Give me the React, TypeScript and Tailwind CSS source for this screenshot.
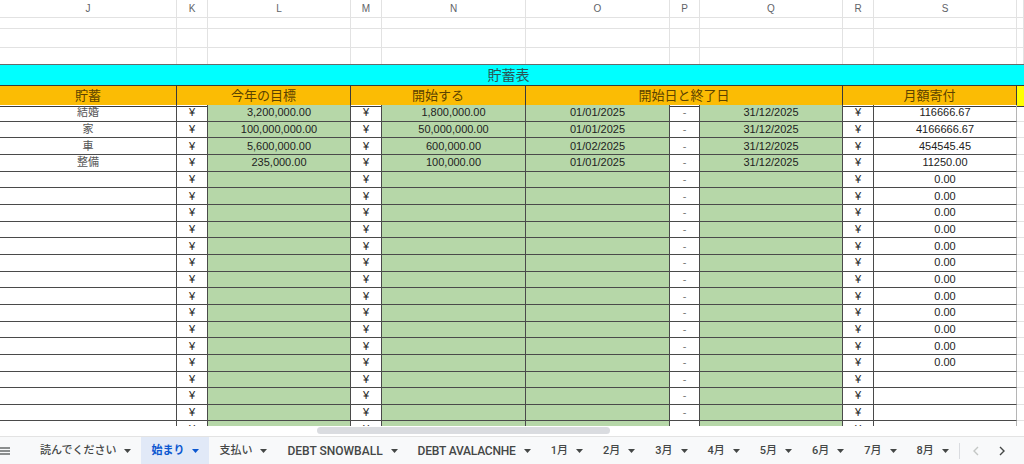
import React from "react";

const COLS =
  "grid grid-cols-[177px_31px_143px_31px_144px_144px_30px_143px_31px_143px_1fr]";
const FONT = {
  fontFamily:
    '"Liberation Sans", Arial, "Noto Sans CJK JP", sans-serif',
};
const LETTERS = ["J", "K", "L", "M", "N", "O", "P", "Q", "R", "S", ""];

type Row = {
  name?: string;
  goal?: string;
  start?: string;
  from?: string;
  to?: string;
  monthly?: string;
};

const data: Row[] = [
  { name: "結婚", goal: "3,200,000.00", start: "1,800,000.00", from: "01/01/2025", to: "31/12/2025", monthly: "116666.67" },
  { name: "家", goal: "100,000,000.00", start: "50,000,000.00", from: "01/01/2025", to: "31/12/2025", monthly: "4166666.67" },
  { name: "車", goal: "5,600,000.00", start: "600,000.00", from: "01/02/2025", to: "31/12/2025", monthly: "454545.45" },
  { name: "整備", goal: "235,000.00", start: "100,000.00", from: "01/01/2025", to: "31/12/2025", monthly: "11250.00" },
];
for (let i = 4; i < 20; i++) data.push({ monthly: i < 16 ? "0.00" : "" });

function Arrow({ active }: { active?: boolean }) {
  return (
    <svg width="7" height="4" viewBox="0 0 7 4" className="shrink-0">
      <polygon points="0,0 7,0 3.5,4" fill={active ? "#0b57d0" : "#444746"} />
    </svg>
  );
}

function Tab({ label, active, size }: { label: string; active?: boolean; size: string }) {
  return (
    <div
      className={`flex items-center gap-[8px] px-[10px] h-full ${
        active ? "bg-[#e1e9f7] text-[#0b57d0] font-bold" : "text-[#444746] font-medium"
      }`}
    >
      <span className={`${size} whitespace-nowrap leading-none`}>{label}</span>
      <Arrow active={active} />
    </div>
  );
}

function EmptyRow({ h }: { h: string }) {
  return (
    <div className={`${COLS} ${h}`}>
      {LETTERS.map((_, i) => (
        <div key={i} className="border-r border-b border-[#e2e2e2]" />
      ))}
    </div>
  );
}

export default function App() {
  const cell =
    "flex items-center justify-center border-r border-b border-[#4a4a4a] leading-none whitespace-nowrap";
  const green = "bg-[#b6d7a8]";
  return (
    <div className="w-[1024px] h-[464px] overflow-hidden bg-white flex flex-col" style={FONT}>
      {/* column letters */}
      <div className={`${COLS} h-[18px] shrink-0`}>
        {LETTERS.map((l, i) => (
          <div
            key={i}
            className="flex items-center justify-center border-r border-b border-[#e2e2e2] text-[10px] text-[#5f6368]"
          >
            {l}
          </div>
        ))}
      </div>
      <EmptyRow h="h-[11px]" />
      <EmptyRow h="h-[19px]" />
      <div className={`${COLS} h-[16px]`}>
        {LETTERS.map((_, i) => (
          <div key={i} className="border-r border-[#e2e2e2]" />
        ))}
      </div>

      {/* title */}
      <div className="h-[22px] shrink-0 bg-[#00ffff] border-t border-b border-t-[#6a6a6a] border-b-[#3a3a3a] flex">
        <div className="w-[1017px] flex items-center justify-center pt-[1px] text-[14px] text-[#2a5555]">
          貯蓄表
        </div>
      </div>

      {/* header */}
      <div className={`${COLS} h-[19px] shrink-0 bg-[#fbbc04] text-[13px] text-[#5c4300]`}>
        <div className="flex items-center justify-center border-r border-b border-[#3a3a3a]">貯蓄</div>
        <div className="col-span-2 flex items-center justify-center border-r border-b border-[#3a3a3a]">今年の目標</div>
        <div className="col-span-2 flex items-center justify-center border-r border-b border-[#3a3a3a]">開始する</div>
        <div className="col-span-3 flex items-center justify-center border-r border-b border-[#3a3a3a]">開始日と終了日</div>
        <div className="col-span-2 flex items-center justify-center border-r border-b border-[#3a3a3a]">月額寄付</div>
        <div className="bg-[#ffff00] border-b border-[#3a3a3a]" />
      </div>

      {/* data */}
      <div className="h-[321px] shrink-0 overflow-hidden text-[11px] text-[#222]">
        {data.map((r, i) => (
          <div key={i} className={`${COLS} h-[16.66px]`}>
            <div className={`${cell} text-[#555]`}>{r.name ?? ""}</div>
            <div className={cell}>¥</div>
            <div className={`${cell} ${green}`}>{r.goal ?? ""}</div>
            <div className={cell}>¥</div>
            <div className={`${cell} ${green}`}>{r.start ?? ""}</div>
            <div className={`${cell} ${green}`}>{r.from ?? ""}</div>
            <div className={`${cell} text-[#777]`}>-</div>
            <div className={`${cell} ${green}`}>{r.to ?? ""}</div>
            <div className={cell}>¥</div>
            <div className={`${cell} border-r-[#b5b5b5]`}>{r.monthly}</div>
            <div className="border-b border-[#e2e2e2]" />
          </div>
        ))}
      </div>

      {/* scrollbar */}
      <div className="h-[10px] shrink-0 bg-white pl-[317px] pt-[1px]">
        <div className="w-[293px] h-[7px] rounded-full bg-[#dadce0]" />
      </div>

      {/* tab bar */}
      <div
        className="h-[28px] shrink-0 border-t border-[#e3e3e3] bg-[#f8f9fa] flex items-stretch"
        style={{ fontFamily: 'Roboto, "Noto Sans CJK JP", sans-serif' }}
      >
        <div className="w-[30px] flex items-center">
          <svg width="11" height="8" viewBox="0 0 11 8">
            <line x1="0" y1="1" x2="10" y2="1" stroke="#444746" strokeWidth="1.2" />
            <line x1="0" y1="4" x2="10" y2="4" stroke="#444746" strokeWidth="1.2" />
            <line x1="0" y1="7" x2="10" y2="7" stroke="#444746" strokeWidth="1.2" />
          </svg>
        </div>
        <Tab label="読んでください" size="text-[11px]" />
        <Tab label="始まり" active size="text-[11px]" />
        <Tab label="支払い" size="text-[11px]" />
        <Tab label="DEBT SNOWBALL" size="text-[12px]" />
        <Tab label="DEBT AVALACNHE" size="text-[12px] tracking-[-0.2px]" />
        {["1月", "2月", "3月", "4月", "5月", "6月", "7月", "8月"].map((m) => (
          <Tab key={m} label={m} size="text-[11px]" />
        ))}
        <div className="flex items-center">
          <div className="w-px h-[16px] bg-[#dadce0]" />
        </div>
        <div className="flex items-center pl-[12px] gap-[18px]">
          <svg width="8" height="10" viewBox="0 0 8 10">
            <polyline points="6,1 2,5 6,9" fill="none" stroke="#c4c7c5" strokeWidth="1.4" />
          </svg>
          <svg width="8" height="10" viewBox="0 0 8 10">
            <polyline points="2,1 6,5 2,9" fill="none" stroke="#444746" strokeWidth="1.4" />
          </svg>
        </div>
      </div>
    </div>
  );
}
